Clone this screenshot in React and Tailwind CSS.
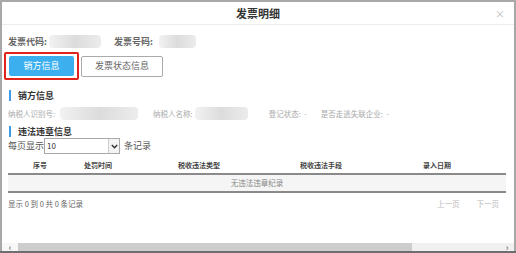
const Blur = ({ w, className = "" }) => (
  <span
    className={`inline-block shrink-0 h-[13px] rounded-sm bg-gradient-to-r from-[#f2f2f2] via-[#dcdcdc] to-[#ececec] ${className}`}
    style={{ width: w }}
  />
);

const columns = [
  { label: "序号", w: "w-[64px]" },
  { label: "处罚时间", w: "w-[52px]" },
  { label: "税收违法类型", w: "w-[150px]" },
  { label: "税收违法手段", w: "w-[94px]" },
  { label: "录入日期", w: "flex-1" },
];

export default function App() {
  return (
    <div className="w-[516px] h-[253px] bg-white flex flex-col font-['Noto_Sans_CJK_SC',sans-serif] overflow-hidden whitespace-nowrap">
      <div className="flex-1 flex flex-col border-l-2 border-t-2 border-r-2 border-[#a8a8a8] min-h-0">
        {/* header */}
        <div className="relative h-[23px] flex items-center justify-center border-b border-[#ececec]">
          <span className="text-[11px] font-bold text-[#333]">发票明细</span>
          <span className="absolute right-[9px] top-[4px] text-[10px] text-[#bbb]">×</span>
        </div>

        <div className="px-[6px] flex-1 flex flex-col">
          {/* invoice code row */}
          <div className="mt-[10px] flex items-center text-[9px] font-bold text-[#666] leading-[13px]">
            <span>发票代码:</span>
            <Blur w={52} className="ml-[2px]" />
            <span className="ml-[13px]">发票号码:</span>
            <Blur w={37} className="ml-[6px]" />
          </div>

          {/* tabs */}
          <div className="mt-[4px] -ml-[4px] flex items-center">
            <div className="border-2 border-[#e0231b] rounded-[2px] px-[3px] py-[2px]">
              <div className="w-[65px] h-[20px] bg-[#3cb0ee] rounded-[2px] flex items-center justify-center text-[9px] text-white">
                销方信息
              </div>
            </div>
            <div className="ml-[2px] w-[82px] h-[21px] border border-[#aaa] rounded-[2px] flex items-center justify-center text-[9px] text-[#666]">
              发票状态信息
            </div>
          </div>

          {/* seller */}
          <div className="mt-[9px] flex items-center leading-[13px]">
            <span className="w-[2px] h-[11px] bg-[#3c9be8] ml-[1px]" />
            <span className="ml-[7px] text-[9px] font-bold text-[#333]">销方信息</span>
          </div>
          <div className="mt-[5px] flex items-center text-[7.5px] text-[#aaa] leading-[13px]">
            <span>纳税人识别号:</span>
            <Blur w={78} className="ml-[5px]" />
            <span className="ml-[15px]">纳税人名称:</span>
            <Blur w={53} className="ml-[2px]" />
            <span className="ml-[21px]">登记状态:&nbsp;&nbsp;-</span>
            <span className="ml-[14px]">是否走逃失联企业:&nbsp;&nbsp;-</span>
          </div>

          {/* violations */}
          <div className="mt-[5px] flex items-center leading-[13px]">
            <span className="w-[2px] h-[11px] bg-[#3c9be8] ml-[1px]" />
            <span className="ml-[7px] text-[9px] font-bold text-[#333]">违法违章信息</span>
          </div>
          <div className="flex items-center text-[9px] text-[#555]">
            <span>每页显示</span>
            <div className="shrink-0 w-[76px] h-[16px] border border-[#a9a9a9] flex items-center justify-between">
              <span className="ml-[2px] text-[8px] text-[#333]">10</span>
              <span className="w-[11px] h-[14px] border-l border-[#ccc] bg-[#f4f4f4] flex items-center justify-center">
                <svg width="7" height="5" viewBox="0 0 7 5">
                  <path d="M0.8 1 L3.5 3.8 L6.2 1" fill="none" stroke="#333" strokeWidth="1.4" />
                </svg>
              </span>
            </div>
            <span className="ml-[4px]">条记录</span>
          </div>

          {/* table */}
          <div className="mt-[3px] mr-[2px]">
            <div className="h-[18px] flex items-center border-b-2 border-[#8a8a8a] text-[7px] font-bold text-[#444]">
              {columns.map((c) => (
                <span key={c.label} className={`${c.w} shrink-0 text-center`}>
                  {c.label}
                </span>
              ))}
            </div>
            <div className="h-[18px] bg-[#f5f5f5] border-b-2 border-[#8a8a8a] flex items-center justify-center text-[7.5px] text-[#888]">
              无违法违章纪录
            </div>
          </div>
          <div className="mt-[5px] mr-[9px] flex items-center text-[7.5px] leading-[12px]">
            <span className="text-[#666]">显示 0 到 0 共 0 条记录</span>
            <span className="ml-auto text-[#bbb]">上一页</span>
            <span className="ml-[17px] text-[#bbb]">下一页</span>
          </div>
        </div>

        {/* horizontal scrollbar */}
        <div className="h-[8px] flex items-center bg-[#f0f0f0]">
          <span className="w-[16px] h-full flex items-center justify-center text-[9px] text-[#555] leading-none bg-[#f7f7f7]">‹</span>
          <span className="w-[394px] h-full bg-[#cdcdcd]" />
          <span className="flex-1" />
          <span className="w-[14px] h-full flex items-center justify-center text-[9px] text-[#555] leading-none">›</span>
        </div>
      </div>
      <div className="h-[2px] bg-[#6e6e6e]" />
    </div>
  );
}
